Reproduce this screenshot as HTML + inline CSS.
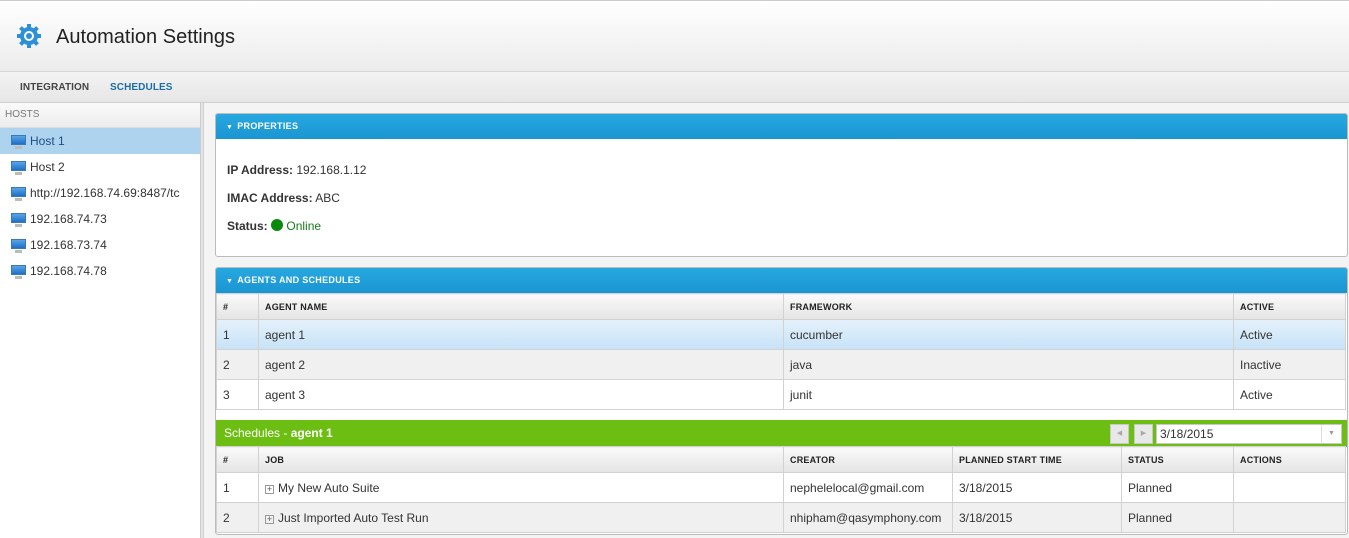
<!DOCTYPE html>
<html><head><style>
*{box-sizing:border-box;margin:0;padding:0}
body{width:1349px;height:538px;overflow:hidden;font-family:"Liberation Sans",Arial,sans-serif;font-size:12px;color:#333;background:#fff;position:relative}
.abs{position:absolute}
#hdr{left:0;top:0;width:1349px;height:72px;background:linear-gradient(#fff,#ececec);border-top:1px solid #ccc;border-bottom:1px solid #d6d6d6}
#tabs{left:0;top:72px;width:1349px;height:31px;background:linear-gradient(#f3f3f3,#e6e6e6);border-bottom:1px solid #d0d0d0}
.tab{position:absolute;top:10px;font-size:10px;font-weight:bold;letter-spacing:.1px}
#side{left:0;top:103px;width:201px;height:435px;background:#fff;border-right:1px solid #ccc}
#split{left:201px;top:103px;width:3px;height:435px;background:#e4e4e4;border-right:1px solid #d0d0d0}
#main{left:204px;top:103px;width:1145px;height:435px;background:#f4f4f4}
.host{position:absolute;left:0;width:200px;height:26px;line-height:26px;padding-left:30px;font-size:12px;color:#333}
.mon{position:absolute;left:11px;top:7px;width:15px;height:10px;background:linear-gradient(#5aa5e6,#1f6fc7);border:1px solid #3a79b8}
.mon:after{content:"";position:absolute;left:3px;top:10px;width:7px;height:3px;background:#bbb}
.panel{position:absolute;left:215px;width:1133px;background:#fff;border:1px solid #bbb;border-radius:3px;overflow:hidden}
.ph{height:25px;background:linear-gradient(#27a8e0,#1a95d2);color:#fff;font-size:9px;font-weight:bold;line-height:25px;padding-left:10px;letter-spacing:.3px}
.ph span{font-size:7px;margin-right:4px}
table{border-collapse:collapse;position:absolute}
td,th{border:1px solid #d2d2d2;text-align:left;padding-left:6px;white-space:nowrap}
th{height:26px;font-size:9px;font-weight:bold;background:linear-gradient(#fafafa,#e4e4e4);color:#222;letter-spacing:.2px}
td{height:30px;font-size:12px}
</style></head><body>
<div id="hdr" class="abs">
<svg class="abs" style="left:16px;top:22px" width="26" height="26" viewBox="0 0 26 26"><g fill="#2d8fd6"><circle cx="13" cy="13" r="9"/><g stroke="#2d8fd6" stroke-width="4"><line x1="13" y1="1" x2="13" y2="25"/><line x1="1" y1="13" x2="25" y2="13"/><line x1="4.5" y1="4.5" x2="21.5" y2="21.5"/><line x1="21.5" y1="4.5" x2="4.5" y2="21.5"/></g></g><circle cx="13" cy="13" r="5" fill="#fff"/><circle cx="13" cy="13" r="3" fill="#2d8fd6"/></svg>
<div class="abs" style="left:56px;top:25px;font-size:20px;color:#222">Automation Settings</div>
</div>
<div id="tabs" class="abs"><div class="tab" style="left:20px;color:#444">INTEGRATION</div><div class="tab" style="left:110px;color:#1b6ea8">SCHEDULES</div>
<div class="abs" style="left:137px;top:25px;width:0;height:0;border:6px solid transparent;border-bottom-color:#fff"></div></div>
<div id="side" class="abs">
<div class="abs" style="left:0;top:0;width:200px;height:25px;background:linear-gradient(#fafafa,#ececec);border-bottom:1px solid #ddd;font-size:10px;color:#777;padding:6px 0 0 5px">HOSTS</div>
<div class="host" style="top:25px;background:#aed3ee;color:#1a4f85"><i class="mon"></i>Host 1</div>
<div class="host" style="top:51px"><i class="mon"></i>Host 2</div>
<div class="host" style="top:77px"><i class="mon"></i>http://192.168.74.69:8487/tc</div>
<div class="host" style="top:103px"><i class="mon"></i>192.168.74.73</div>
<div class="host" style="top:129px"><i class="mon"></i>192.168.73.74</div>
<div class="host" style="top:155px"><i class="mon"></i>192.168.74.78</div>
</div>
<div id="split" class="abs"></div>
<div id="main" class="abs"></div>
<div class="panel" style="top:113px;height:144px">
<div class="ph"><span>▼</span>PROPERTIES</div>
<div class="abs" style="left:11px;top:49px"><b>IP Address:</b> 192.168.1.12</div>
<div class="abs" style="left:11px;top:77px"><b>IMAC Address:</b> ABC</div>
<div class="abs" style="left:11px;top:105px"><b>Status:</b> <span style="display:inline-block;width:12px;height:12px;border-radius:50%;background:#0a8a0a;vertical-align:-1px"></span> <span style="color:#1a7a1a">Online</span></div>
</div>
<div class="panel" style="top:267px;height:268px">
<div class="ph"><span>▼</span>AGENTS AND SCHEDULES</div>
<table style="left:0;top:25px;width:1130px">
<tr><th style="width:42px">#</th><th style="width:525px">AGENT NAME</th><th style="width:450px">FRAMEWORK</th><th>ACTIVE</th></tr>
<tr style="background:linear-gradient(#e4f1fb,#c7e2f7)"><td>1</td><td>agent 1</td><td>cucumber</td><td>Active</td></tr>
<tr style="background:#f0f0f0"><td>2</td><td>agent 2</td><td>java</td><td>Inactive</td></tr>
<tr><td>3</td><td>agent 3</td><td>junit</td><td>Active</td></tr>
</table>
<div class="abs" style="left:0;top:152px;width:1133px;height:27px;background:#6cbf12;color:#fff;font-size:12px;line-height:27px;padding-left:8px">Schedules - <b>agent 1</b>
<div class="abs" style="left:894px;top:4px;width:19px;height:20px;background:#e8e8e8;border:1px solid #c8c8c8;font-size:7px;color:#aaa;line-height:18px;text-align:center;padding:0">◀</div>
<div class="abs" style="left:918px;top:4px;width:19px;height:20px;background:#e8e8e8;border:1px solid #c8c8c8;font-size:7px;color:#aaa;line-height:18px;text-align:center;padding:0">▶</div>
<div class="abs" style="left:940px;top:4px;width:186px;height:20px;background:#fff;border:1px solid #c8c8c8;color:#333;line-height:18px;padding-left:3px">3/18/2015<div class="abs" style="right:0;top:0;width:20px;height:18px;border-left:1px solid #ddd;font-size:7px;color:#999;text-align:center">▼</div></div>
</div>
<table style="left:0;top:178px;width:1130px">
<tr><th style="width:42px">#</th><th style="width:525px">JOB</th><th style="width:169px">CREATOR</th><th style="width:169px">PLANNED START TIME</th><th style="width:112px">STATUS</th><th>ACTIONS</th></tr>
<tr><td>1</td><td><span style="display:inline-block;width:9px;height:9px;border:1px solid #999;font-size:9px;line-height:7px;text-align:center;color:#555;margin-right:4px">+</span>My New Auto Suite</td><td>nephelelocal@gmail.com</td><td>3/18/2015</td><td>Planned</td><td></td></tr>
<tr style="background:#f0f0f0"><td>2</td><td><span style="display:inline-block;width:9px;height:9px;border:1px solid #999;font-size:9px;line-height:7px;text-align:center;color:#555;margin-right:4px">+</span>Just Imported Auto Test Run</td><td>nhipham@qasymphony.com</td><td>3/18/2015</td><td>Planned</td><td></td></tr>
</table>
</div>
</body></html>
